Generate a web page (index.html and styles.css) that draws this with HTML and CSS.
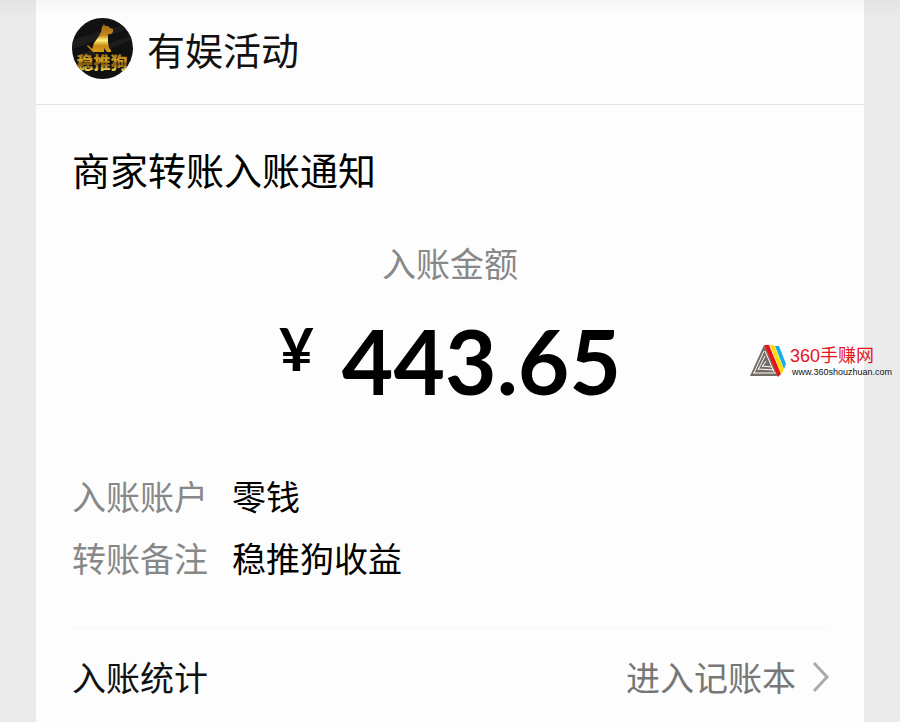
FILE: index.html
```html
<!DOCTYPE html>
<html lang="zh-CN">
<head>
<meta charset="utf-8">
<meta name="viewport" content="width=device-width, initial-scale=1">
<title>商家转账入账通知</title>
<link rel="stylesheet" href="styles.css">
</head>
<body>
<main class="card">
  <header class="sender">
    <svg class="avatar" viewBox="0 0 61 61" aria-hidden="true">
      <defs>
        <linearGradient id="gold" x1="0" y1="0" x2="0" y2="1">
          <stop offset="0" stop-color="#a06c1c"/>
          <stop offset=".4" stop-color="#c08618"/>
          <stop offset=".58" stop-color="#fff07a"/>
          <stop offset=".78" stop-color="#c88a14"/>
          <stop offset="1" stop-color="#d99a1c"/>
        </linearGradient>
        <linearGradient id="letters" x1="0" y1="0" x2="0" y2="1">
          <stop offset=".15" stop-color="#8d6415"/>
          <stop offset=".45" stop-color="#d8a51f"/>
          <stop offset=".6" stop-color="#7d560c"/>
          <stop offset=".85" stop-color="#f2d34c"/>
        </linearGradient>
        <clipPath id="disc"><circle cx="30.500" cy="30.500" r="30.500"/></clipPath>
      </defs>
      <g clip-path="url(#disc)">
        <rect width="61" height="61" fill="#111"/>
        <path d="M0 22 61 4v5L0 31zM8 36 61 17v4L20 38z" fill="#1d1d1d"/>
        <path d="M30 9 32 6 33 8 36 8 38 10 41 11 41 14 39 16 36 16 36 24 37 30 39 32 39 34 35 34 32 30 32 34H21L19 32 15 28 16 27 20 31 22 25 27 18 29 14z" fill="url(#gold)"/>
        <text class="avatar-text" x="30" y="51" text-anchor="middle" fill="url(#letters)">稳推狗</text>
      </g>
    </svg>
    <span class="sender-name">有娱活动</span>
  </header>

  <section class="notice">
    <h1 class="title">商家转账入账通知</h1>
    <p class="amount-label">入账金额</p>
    <p class="amount"><span class="currency">¥</span><span class="value">443.65</span></p>
    <dl class="details">
      <dt>入账账户</dt><dd>零钱</dd>
      <dt>转账备注</dt><dd>稳推狗收益</dd>
    </dl>
    <footer class="stats">
      <span>入账统计</span>
      <a class="ledger" href="#">进入记账本
        <svg class="chevron" viewBox="0 0 18 32" aria-hidden="true"><path d="M2 2 15 16 2 30"/></svg>
      </a>
    </footer>
  </section>
</main>

<aside class="watermark">
  <svg class="mark" viewBox="0 0 36 32" aria-hidden="true">
    <path d="M14 0 28 31H0z" fill="#766c66"/>
    <path d="M14 6 4 28M15 11 8 25M16 16 12 22M12 21 22 22M8 24 24 25M3 28 26 28M15 6 24 27" fill="none" stroke="#fdfdfd" stroke-width="1"/>
    <path d="M14 0h5l12 29-3 3z" fill="#e5141b"/>
    <path d="M20 0h4l10 25-3 4z" fill="#ffdb00"/>
    <path d="M25 1h4l7 18-2 5z" fill="#13aee8"/>
  </svg>
  <div class="watermark-text">
    <span class="site-name">360手赚网</span>
    <span class="site-url">www.360shouzhuan.com</span>
  </div>
</aside>
</body>
</html>
```
FILE: styles.css
```css
* { box-sizing: border-box; }

body {
  margin: 0;
  padding: 0 36px;
  min-height: 100vh;
  position: relative;
  background: linear-gradient(#e3e3e3, #ebebeb 20px);
  font-family: "Noto Sans CJK SC", sans-serif;
  font-size: 34px;
  line-height: 50px;
  color: #111;
}

h1, p, dl, dd { margin: 0; font-weight: 400; }

.card {
  min-height: 100vh;
  background: linear-gradient(#f7f7f7, #fdfdfd 16px);
}

.sender {
  display: flex;
  align-items: center;
  gap: 14px;
  padding: 18px 36px 25px;
  border-bottom: 1px solid #e2e2e2;
}

.avatar { width: 61px; height: 61px; }
.avatar-text { font-size: 17px; font-weight: 900; }
.sender-name { font-size: 38px; }

.notice { padding: 36px 36px 0; }
.title { font-size: 38px; line-height: 56px; color: #000; }

.amount-label {
  margin-top: 41px;
  text-align: center;
  color: #888;
}

.amount {
  display: flex;
  justify-content: center;
  gap: 28px;
  margin-top: 28px;
  font-family: Lato, sans-serif;
  font-weight: 700;
  color: #000;
}

.currency { font-size: 60px; line-height: 64px; }
.value { font-size: 89px; line-height: 90px; }

.details {
  display: grid;
  grid-template-columns: auto 1fr;
  gap: 12px 24px;
  margin-top: 65px;
  color: #000;
}

.details dt { color: #888; }

.stats {
  display: flex;
  justify-content: space-between;
  margin-top: 44px;
  padding: 24px 0 18px;
  border-top: 1px solid #f8f8f8;
}

.ledger {
  display: flex;
  align-items: center;
  gap: 16px;
  margin-right: -2px;
  color: #777;
  text-decoration: none;
}

.chevron {
  width: 18px;
  height: 32px;
  fill: none;
  stroke: #aaa;
  stroke-width: 3;
}

.watermark {
  position: absolute;
  top: 345px;
  right: 8px;
  display: flex;
  gap: 4px;
  font-family: "Liberation Sans", "Noto Sans CJK SC", sans-serif;
}

.mark { width: 36px; height: 32px; }
.watermark-text { display: flex; flex-direction: column; }
.site-name { font-size: 18px; line-height: 22px; color: #e5141b; }

.site-url {
  padding-left: 2px;
  font-size: 9px;
  line-height: 10px;
  color: #111;
}
```
